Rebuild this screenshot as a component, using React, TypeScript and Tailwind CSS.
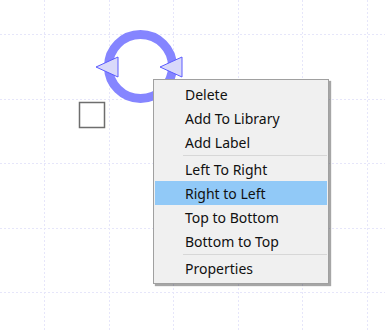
const gridX = [44, 109, 173, 238, 302, 367];
const gridY = [34, 99, 163, 228, 292];

type MenuEntry = { label: string; active?: boolean } | "sep";

const entries: MenuEntry[] = [
  { label: "Delete" },
  { label: "Add To Library" },
  { label: "Add Label" },
  "sep",
  { label: "Left To Right" },
  { label: "Right to Left", active: true },
  { label: "Top to Bottom" },
  { label: "Bottom to Top" },
  "sep",
  { label: "Properties" },
];

function Canvas() {
  return (
    <svg width="385" height="332" className="block">
      {gridX.map((x) => (
        <line
          key={"x" + x}
          x1={x + 0.5}
          y1={0}
          x2={x + 0.5}
          y2={332}
          stroke="#e6e6fa"
          strokeDasharray="2 2"
        />
      ))}
      {gridY.map((y) => (
        <line
          key={"y" + y}
          x1={0}
          y1={y + 0.5}
          x2={385}
          y2={y + 0.5}
          stroke="#e6e6fa"
          strokeDasharray="2 2"
        />
      ))}
      <circle cx="140.5" cy="66.5" r="32" fill="none" stroke="#8585ff" strokeWidth="9" />
      <polygon points="96,67 118,57 118,77" fill="#d9d9fa" stroke="#5c5cff" strokeWidth="1" />
      <polygon points="160,67 182,57 182,77" fill="#d9d9fa" stroke="#5c5cff" strokeWidth="1" />
      <rect x="79.5" y="102.5" width="25" height="25" fill="#fff" stroke="#6e6e6e" strokeWidth="1.5" />
    </svg>
  );
}

export default function App() {
  return (
    <div className="relative w-[385px] h-[332px] bg-white overflow-hidden">
      <Canvas />
      <div
        className="absolute left-[153px] top-[79px] w-[176px] bg-[#f0f0f0] border border-[#a0a0a0] pt-[2px] pb-[3px] px-[1px] shadow-[2px_2px_1px_rgba(0,0,0,0.35)]"
        style={{ fontFamily: '"Segoe UI", "Noto Sans", sans-serif' }}
      >
        {entries.map((e, i) =>
          e === "sep" ? (
            <div key={i} className="h-[3px] pl-[28px] flex items-center">
              <div className="h-px w-full bg-[#d7d7d7]" />
            </div>
          ) : (
            <div
              key={i}
              className={`h-[24px] flex items-center pl-[30px] text-[14px] text-[#111] ${
                e.active ? "bg-[#91c9f7]" : ""
              }`}
            >
              {e.label}
            </div>
          )
        )}
      </div>
    </div>
  );
}
